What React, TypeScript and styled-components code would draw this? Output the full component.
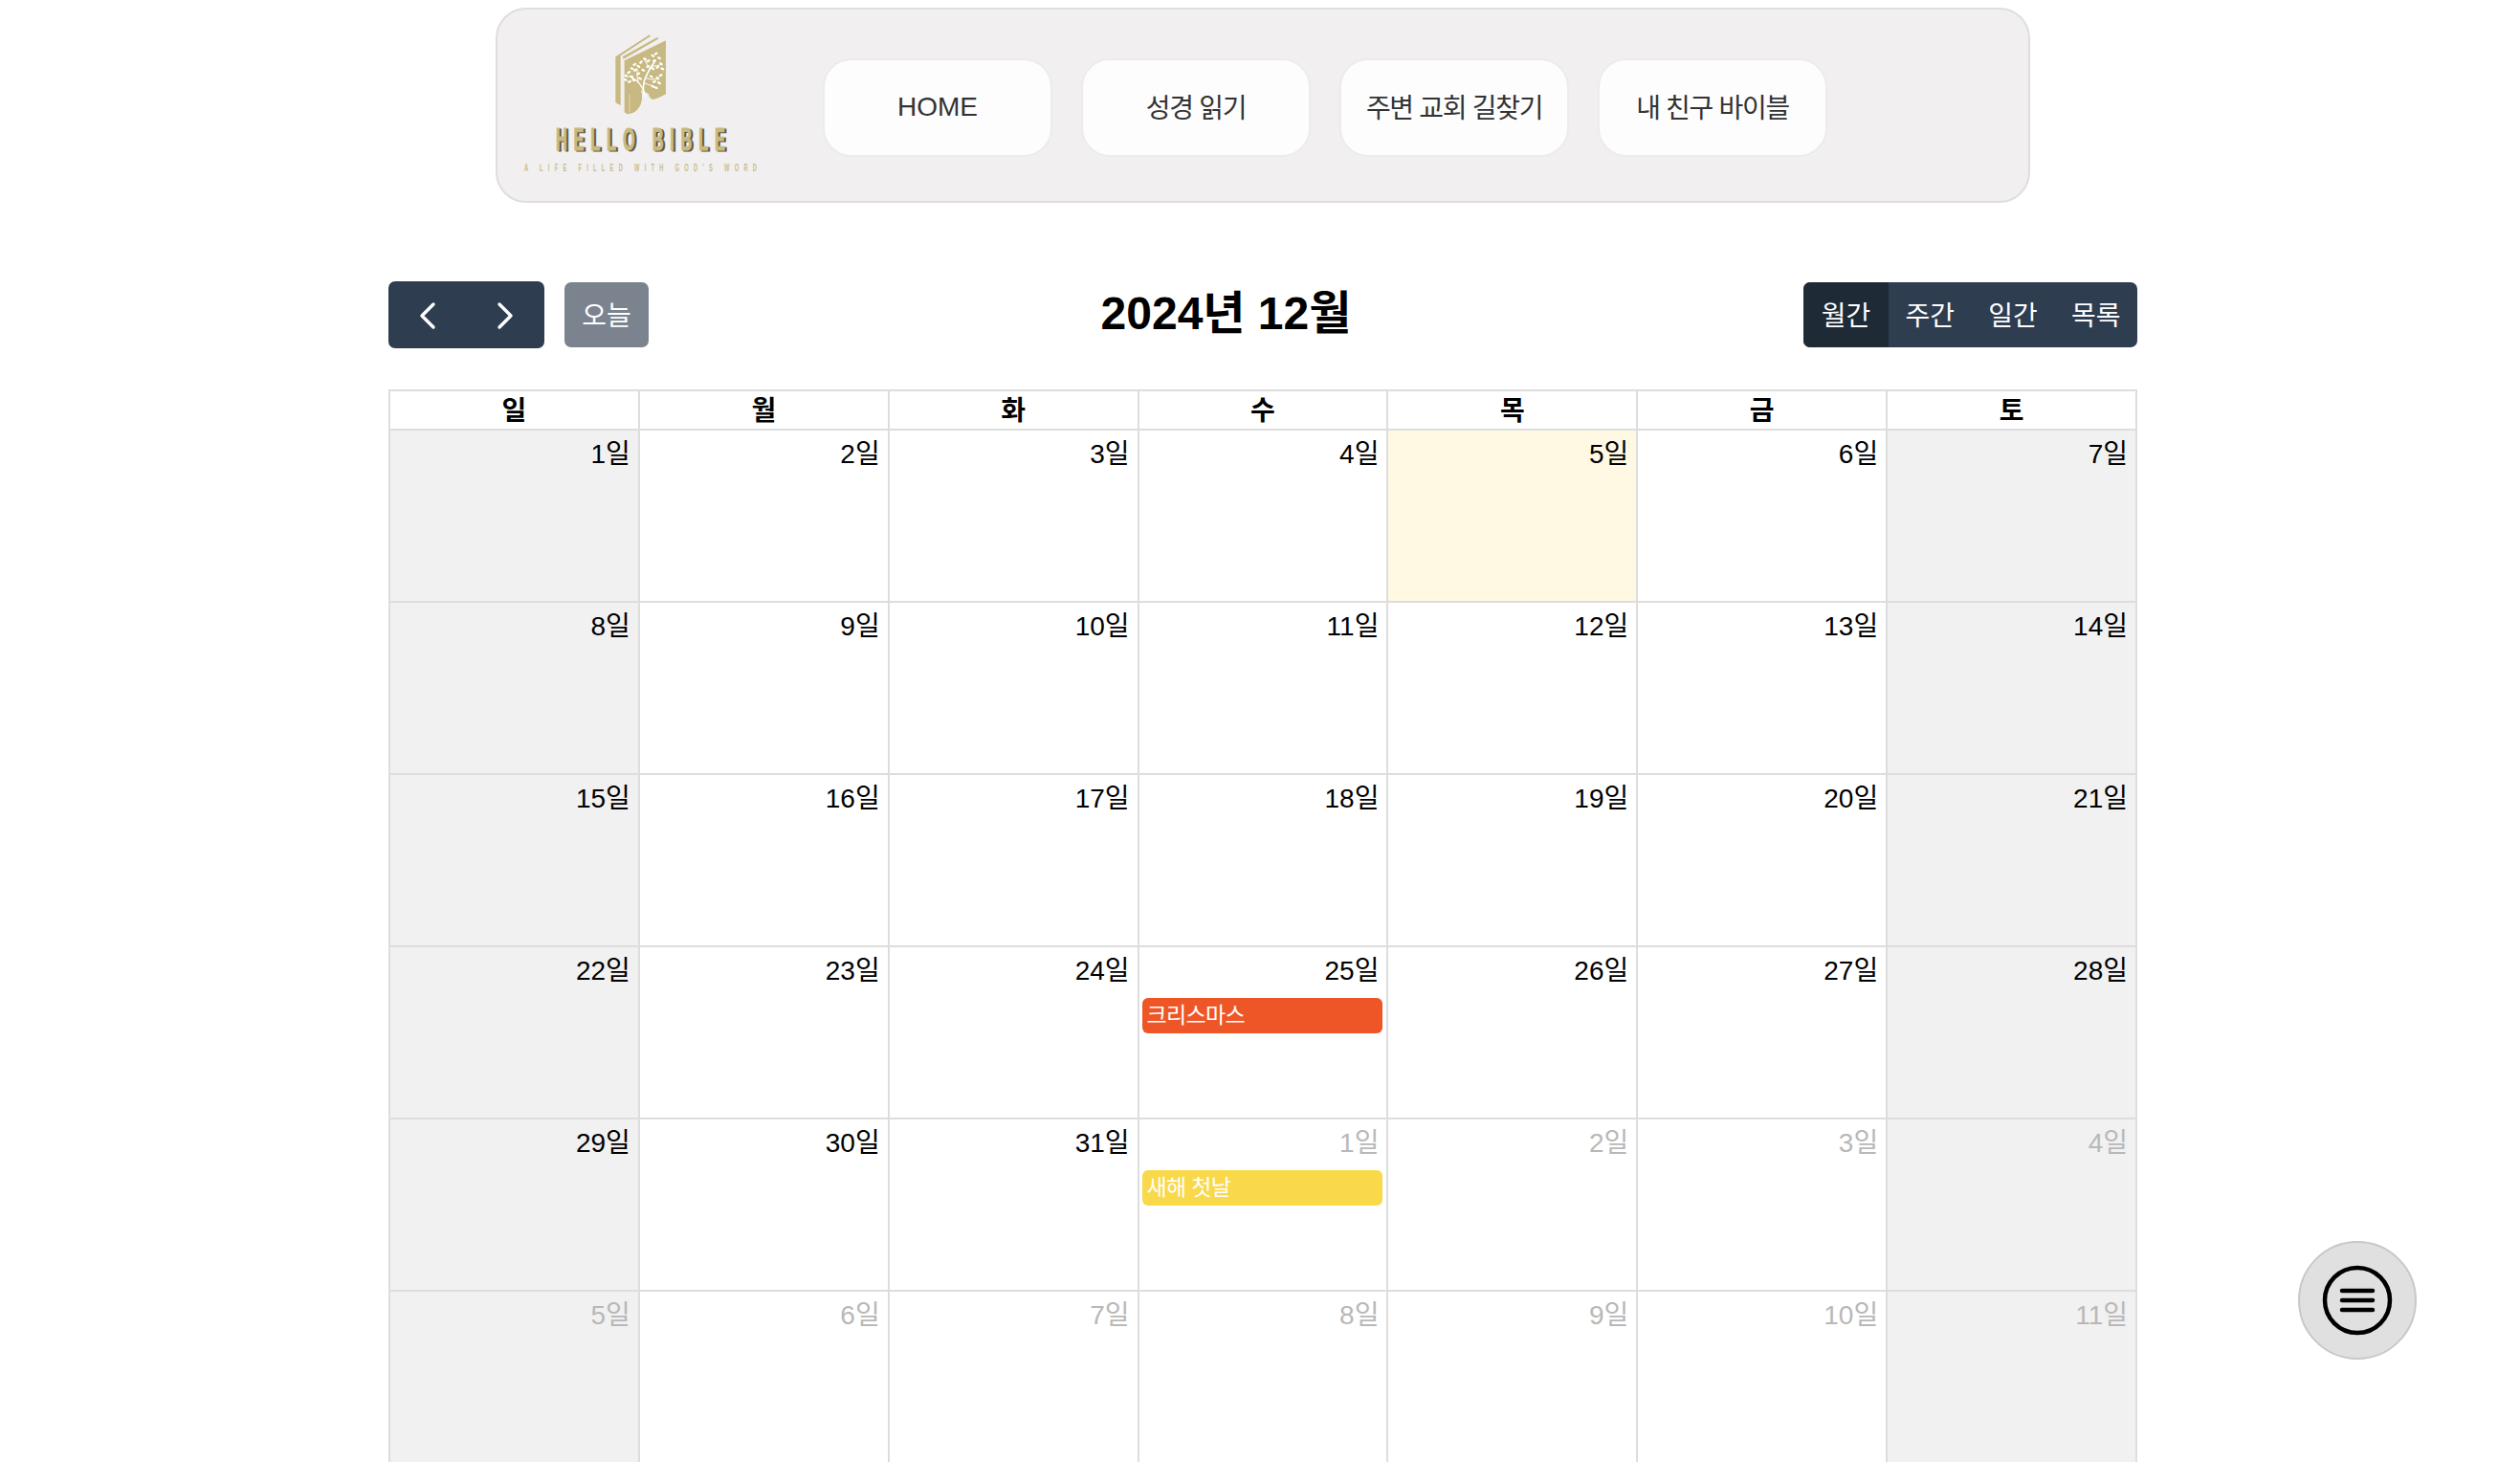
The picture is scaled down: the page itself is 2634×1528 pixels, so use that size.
import { ChevronLeft, ChevronRight } from 'lucide-react';
import { createGlobalStyle, styled } from 'styled-components';

const GlobalStyle = createGlobalStyle`
  html, body {
    margin: 0;
    padding: 0;
    height: 100%;
    overflow: hidden;
    background: #fff;
    font-family: "Liberation Sans", "Noto Sans CJK KR", sans-serif;
  }
  * { box-sizing: border-box; }
`;

const Page = styled.div`
  display: flex;
  flex-direction: column;
  align-items: center;
  padding: 8px 0 0 6px;
`;

const Header = styled.header`
  display: flex;
  align-items: flex-start;
  width: 1604px;
  height: 204px;
  padding: 20px 0 0 19px;
  background: #f1eff0;
  border: 2px solid #dfdedf;
  border-radius: 32px;
`;

const LogoMark = styled.svg`
  display: block;
  flex: none;
  width: 262px;
  height: 155px;
`;

const Menu = styled.nav`
  display: flex;
  gap: 30px;
  margin: 31px 0 0 59px;
`;

const MenuButton = styled.a<{ $latin?: boolean }>`
  display: flex;
  align-items: center;
  justify-content: center;
  width: 240px;
  height: 103px;
  padding-bottom: ${(props) => (props.$latin ? '2px' : '4px')};
  background: #fdfdfd;
  border: 2px solid #ececec;
  border-radius: 30px;
  color: #333;
  font-size: 28px;
  letter-spacing: ${(props) => (props.$latin ? '0' : '-1.3px')};
`;

const Calendar = styled.section`
  width: 1828px;
  margin-top: 82px;
`;

const Toolbar = styled.div`
  display: flex;
  align-items: center;
  justify-content: space-between;
  height: 70px;
  margin-bottom: 43px;
`;

const ToolGroup = styled.div`
  display: flex;
  align-items: center;
  gap: 21px;
`;

const Arrows = styled.div`
  display: flex;
  width: 163px;
  height: 70px;
  background: #2f3d50;
  border-radius: 7px;
`;

const ArrowButton = styled.button`
  flex: 1;
  display: flex;
  align-items: center;
  justify-content: center;
  padding: 1px 0 0;
  border: 0;
  background: none;
  color: #fff;
`;

const TodayButton = styled.button`
  width: 88px;
  height: 68px;
  padding: 0 0 3px;
  border: 0;
  border-radius: 7px;
  background: #7b838e;
  color: #fff;
  font: inherit;
  font-size: 28px;
`;

const Title = styled.h2`
  margin: 0;
  padding-bottom: 3px;
  color: #000;
  font-size: 48px;
  font-weight: 700;
  line-height: 1;
`;

const Views = styled.div`
  display: flex;
  width: 349px;
  height: 68px;
  overflow: hidden;
  background: #2f3d50;
  border-radius: 7px;
`;

const ViewButton = styled.button<{ $active?: boolean }>`
  flex: ${(props) => (props.$active ? '0 0 89px' : '1')};
  padding: 0 0 3px;
  border: 0;
  background: ${(props) => (props.$active ? '#1e2a36' : 'transparent')};
  color: #fff;
  font: inherit;
  font-size: 28px;
`;

const Grid = styled.div`
  display: grid;
  grid-template-columns: repeat(7, 1fr);
  grid-template-rows: 41px;
  grid-auto-rows: 180px;
  border-top: 2px solid #ddd;
  border-left: 2px solid #ddd;
`;

const DayName = styled.div`
  display: flex;
  align-items: center;
  justify-content: center;
  padding-bottom: 3px;
  border-right: 2px solid #ddd;
  border-bottom: 2px solid #ddd;
  color: #000;
  font-size: 28px;
  font-weight: 700;
`;

const Cell = styled.div<{ $weekend?: boolean; $today?: boolean }>`
  min-width: 0;
  padding: 0 1px;
  border-right: 2px solid #ddd;
  border-bottom: 2px solid #ddd;
  background: ${(props) => {
    if (props.$today) return '#fff9e3';
    return props.$weekend ? '#f1f1f1' : '#fff';
  }};
`;

const DateLabel = styled.div<{ $muted?: boolean }>`
  padding: 9px 7px 7px 0;
  color: ${(props) => (props.$muted ? '#b8b8b8' : '#000')};
  font-size: 28px;
  line-height: 32px;
  text-align: right;
`;

const EventBar = styled.div<{ $color: string }>`
  height: 37px;
  margin: 5px 3px 0 2px;
  padding-left: 5px;
  overflow: hidden;
  background: ${(props) => props.$color};
  border-radius: 6px;
  color: #fff;
  font-size: 23px;
  letter-spacing: -0.7px;
  line-height: 36px;
  white-space: nowrap;
`;

const Fab = styled.button`
  position: fixed;
  right: 108px;
  bottom: 107px;
  display: flex;
  align-items: center;
  justify-content: center;
  width: 124px;
  height: 124px;
  padding: 0;
  background: #e1e0e1;
  border: 2px solid #c9c8c9;
  border-radius: 50%;
`;

const GOLD = '#c7b981';

// leaves of the tree on the book cover
const leaves: [number, number, number][] = [
  [62, 148, 25], [70, 137, -30], [59, 160, 20], [78, 150, 10], [72, 166, -20], [85, 161, 30],
  [90, 130, -35], [100, 118, 30], [88, 112, -25], [108, 105, -40], [120, 95, 20], [131, 101, -30],
  [145, 85, 35], [155, 78, -30], [165, 92, 25], [150, 100, -20], [171, 110, 40], [160, 121, -35],
  [175, 126, 20], [145, 125, 35], [130, 118, -30], [115, 130, 25], [100, 141, -30], [170, 146, -25],
  [160, 155, 30], [150, 166, -20], [165, 170, 30], [140, 150, 25], [145, 181, 35], [155, 185, 20],
  [105, 156, 30], [80, 125, 20],
];

function Logo() {
  return (
    <LogoMark viewBox="540 30 262 155">
      <g transform="translate(635 30) scale(0.3333)">
        <path d="M28 88 L136 18 L137 24 L44 85 L44 240 L28 232 Z" fill={GOLD} />
        <path d="M50 88 L160 26 L162 32 L53 95 Z" fill={GOLD} />
        <path
          d="M56 100 L186 37 L186 205 Q152 224 143 221 Q133 217 132 205 L108 192 Q118 225 100 250 Q88 266 66 268 L56 262 Z"
          fill={GOLD}
        />
        <path d="M72 205 L72 262" stroke="#efe9d4" strokeWidth="2" />
        <g fill="none" stroke="#fff" strokeLinecap="round" strokeWidth="3">
          <path d="M120 212 Q112 188 118 165 Q125 140 152 102" strokeWidth="5" />
          <path d="M114 190 Q100 160 72 150" strokeWidth="4" />
          <path d="M100 170 Q94 150 96 125" />
          <path d="M122 155 Q140 162 162 158" />
          <path d="M135 125 Q125 112 120 97" />
          <path d="M140 118 Q158 118 172 112" />
          <path d="M116 170 Q130 175 146 180" />
        </g>
        {leaves.map(([x, y, angle]) => (
          <ellipse
            key={`${x}-${y}`}
            cx={x}
            cy={y}
            rx="6.5"
            ry="3.6"
            fill="#fff"
            transform={`rotate(${angle} ${x} ${y})`}
          />
        ))}
      </g>
      <g fontFamily="'Liberation Sans', sans-serif" fontWeight="700">
        <text
          transform="translate(584 158) scale(0.5 1)"
          fontSize="33"
          textLength="354"
          lengthAdjust="spacing"
          fill="#5f5338"
          stroke="#5f5338"
          strokeWidth="1"
        >
          HELLO BIBLE
        </text>
        <text
          transform="translate(582 157) scale(0.5 1)"
          fontSize="33"
          textLength="354"
          lengthAdjust="spacing"
          fill={GOLD}
          stroke={GOLD}
          strokeWidth="1"
        >
          HELLO BIBLE
        </text>
        <text
          transform="translate(549 179) scale(0.5 1)"
          fontSize="11.5"
          textLength="486"
          lengthAdjust="spacing"
          fill="#c9bd8c"
        >
          A LIFE FILLED WITH GOD'S WORD
        </text>
      </g>
    </LogoMark>
  );
}

type Day = {
  label: number;
  muted?: boolean;
  today?: boolean;
  event?: { title: string; color: string };
};

const days: Day[] = [];
for (let i = 1; i <= 31; i += 1) days.push({ label: i, today: i === 5 });
for (let i = 1; i <= 11; i += 1) days.push({ label: i, muted: true });
days[24].event = { title: '크리스마스', color: '#ef5627' };
days[31].event = { title: '새해 첫날', color: '#f9d849' };

const menus = ['HOME', '성경 읽기', '주변 교회 길찾기', '내 친구 바이블'];
const dayNames = ['일', '월', '화', '수', '목', '금', '토'];
const views = ['월간', '주간', '일간', '목록'];

export default function App() {
  return (
    <Page>
      <GlobalStyle />
      <Header>
        <Logo />
        <Menu>
          {menus.map((menu) => (
            <MenuButton key={menu} $latin={menu === 'HOME'}>
              {menu}
            </MenuButton>
          ))}
        </Menu>
      </Header>
      <Calendar>
        <Toolbar>
          <ToolGroup>
            <Arrows>
              <ArrowButton>
                <ChevronLeft size={48} strokeWidth={1.7} />
              </ArrowButton>
              <ArrowButton>
                <ChevronRight size={48} strokeWidth={1.7} />
              </ArrowButton>
            </Arrows>
            <TodayButton>오늘</TodayButton>
          </ToolGroup>
          <Title>2024년 12월</Title>
          <Views>
            {views.map((view, index) => (
              <ViewButton key={view} $active={index === 0}>
                {view}
              </ViewButton>
            ))}
          </Views>
        </Toolbar>
        <Grid>
          {dayNames.map((name) => (
            <DayName key={name}>{name}</DayName>
          ))}
          {days.map((day, index) => (
            <Cell key={index} $weekend={index % 7 === 0 || index % 7 === 6} $today={day.today}>
              <DateLabel $muted={day.muted}>{day.label}일</DateLabel>
              {day.event && <EventBar $color={day.event.color}>{day.event.title}</EventBar>}
            </Cell>
          ))}
        </Grid>
      </Calendar>
      <Fab>
        <svg width="76" height="76" viewBox="0 0 76 76" fill="none" stroke="#000" strokeLinecap="round">
          <circle cx="38" cy="38" r="34" strokeWidth="4.5" />
          <path d="M22 28 H54 M22 38 H54 M22 48 H54" strokeWidth="4.5" />
        </svg>
      </Fab>
    </Page>
  );
}
